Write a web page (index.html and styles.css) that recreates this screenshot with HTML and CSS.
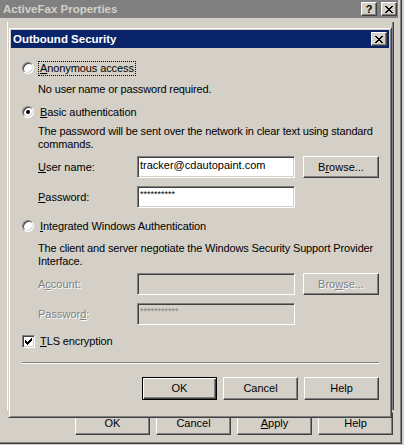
FILE: index.html
```html
<!DOCTYPE html>
<html>
<head>
<meta charset="utf-8">
<link rel="stylesheet" href="styles.css">
</head>
<body>
<div class="win">
  <div class="titlebar inactive">
    <span class="title">ActiveFax Properties</span>
    <div class="caps">
      <span class="cap-btn q">?</span>
      <span class="cap-btn"><svg class="xglyph" width="8" height="7" viewBox="0 0 8 7"><path d="M0 0h2v1H0zM6 0h2v1H6zM1 1h2v1H1zM5 1h2v1H5zM2 2h4v1H2zM3 3h2v1H3zM2 4h4v1H2zM1 5h2v1H1zM5 5h2v1H5zM0 6h2v1H0zM6 6h2v1H6z"/></svg></span>
    </div>
  </div>
  <div class="panel"></div>
  <div class="outer-actions">
    <div class="btn">OK</div>
    <div class="btn">Cancel</div>
    <div class="btn"><u>A</u>pply</div>
    <div class="btn">Help</div>
  </div>

  <div class="dialog">
    <div class="titlebar active">
      <span class="title">Outbound Security</span>
      <div class="caps">
        <span class="cap-btn"><svg class="xglyph" width="8" height="7" viewBox="0 0 8 7"><path d="M0 0h2v1H0zM6 0h2v1H6zM1 1h2v1H1zM5 1h2v1H5zM2 2h4v1H2zM3 3h2v1H3zM2 4h4v1H2zM1 5h2v1H1zM5 5h2v1H5zM0 6h2v1H0zM6 6h2v1H6z"/></svg></span>
      </div>
    </div>
    <div class="dlg-body">
      <div class="opt"><span class="radio"></span><span class="lbl focus"><u>A</u>nonymous access</span></div>
      <p class="desc">No user name or password required.</p>

      <div class="opt gap-basic"><span class="radio checked"></span><span class="lbl"><u>B</u>asic authentication</span></div>
      <p class="desc desc-tight">The password will be sent over the network in clear text using standard<br>commands.</p>
      <div class="field f-first">
        <span class="flabel"><u>U</u>ser name:</span>
        <div class="edit">tracker@cdautopaint.com</div>
        <div class="btn browse">B<u>r</u>owse...</div>
      </div>
      <div class="field">
        <span class="flabel"><u>P</u>assword:</span>
        <div class="edit pw">**********</div>
      </div>

      <div class="opt gap-int"><span class="radio"></span><span class="lbl"><u>I</u>ntegrated Windows Authentication</span></div>
      <p class="desc desc-int">The client and server negotiate the Windows Security Support Provider<br>Interface.</p>
      <div class="field f-first disabled">
        <span class="flabel">A<u>c</u>count:</span>
        <div class="edit"></div>
        <div class="btn browse">Bro<u>w</u>se...</div>
      </div>
      <div class="field disabled">
        <span class="flabel">Passwor<u>d</u>:</span>
        <div class="edit pw">***********</div>
      </div>

      <div class="opt gap-tls"><span class="check"><svg width="7" height="7" viewBox="0 0 7 7"><path d="M0 2h1v3H0zM1 3h1v3H1zM2 4h1v3H2zM3 3h1v3H3zM4 2h1v3H4zM5 1h1v3H5zM6 0h1v3H6z"/></svg></span><span class="lbl chk-lbl"><u>T</u>LS encryption</span></div>

      <div class="sep"></div>
      <div class="actions">
        <div class="btn default">OK</div>
        <div class="btn">Cancel</div>
        <div class="btn">Help</div>
      </div>
    </div>
  </div>
</div>
</body>
</html>
```
FILE: styles.css
```css
* { box-sizing: border-box; }
html, body { margin: 0; padding: 0; }
body {
  width: 404px;
  height: 445px;
  overflow: hidden;
  background: #d4d0c8;
  font-family: "Liberation Sans", Arial, sans-serif;
  font-size: 11px;
  line-height: 13px;
  color: #000;
}
u { text-decoration: underline; text-underline-offset: 1px; }

.win {
  position: relative;
  width: 402px;
  height: 444px;
  border-right: 1px solid #404040;
  border-bottom: 1px solid #404040;
  box-shadow: inset -1px -1px #808080;
}

/* title bars */
.titlebar {
  display: flex;
  align-items: center;
  justify-content: space-between;
  height: 18px;
  font-weight: bold;
  font-size: 11.5px;
  line-height: 18px;
  white-space: nowrap;
}
.titlebar.inactive {
  width: 398px;
  background: #808080;
  color: #d4d0c8;
  padding-left: 3px;
}
.titlebar.active {
  background: #0a246a;
  color: #fff;
  padding-left: 2px;
}
.caps { display: flex; gap: 4px; margin-right: 1px; }
.titlebar.active .caps { margin-right: 2px; }
.cap-btn {
  width: 16px;
  height: 14px;
  display: flex;
  align-items: center;
  justify-content: center;
  background: #d4d0c8;
  border: 1px solid;
  border-color: #fff #404040 #404040 #fff;
  box-shadow: inset -1px -1px #808080, inset 1px 1px #d4d0c8;
  color: #000;
  font-size: 11px;
  line-height: 12px;
  font-weight: bold;
}
.xglyph { display: block; fill: #000; shape-rendering: crispEdges; }

/* background tab panel of the property sheet */
.panel {
  margin: 4px 0 0 7px;
  width: 387px;
  height: 388px;
  border-left: 1px solid #fff;
  border-right: 1px solid #404040;
  box-shadow: inset -1px 0 #808080;
}
.outer-actions {
  display: flex;
  justify-content: flex-end;
  gap: 6px;
  margin-top: 2px;
  padding-right: 8px;
}

/* buttons */
.btn {
  flex: none;
  width: 75px;
  height: 23px;
  display: flex;
  align-items: center;
  justify-content: center;
  background: #d4d0c8;
  border: 1px solid;
  border-color: #fff #404040 #404040 #fff;
  box-shadow: inset -1px -1px #808080, inset 1px 1px #d4d0c8;
  white-space: nowrap;
}
.btn.default {
  border: 1px solid #000;
  box-shadow: inset 1px 1px #fff, inset -1px -1px #404040, inset -2px -2px #808080;
}

/* dialog window */
.dialog {
  position: absolute;
  left: 8px;
  top: 27px;
  width: 384px;
  height: 391px;
  background: #d4d0c8;
  border: 1px solid;
  border-color: #d4d0c8 #404040 #404040 #d4d0c8;
  box-shadow: inset 1px 1px #fff, inset -1px -1px #808080;
  padding: 2px;
}
.dlg-body { padding: 14px 10px 0 11px; }

.opt { display: flex; align-items: center; height: 13px; white-space: nowrap; }
.lbl { margin-left: 5px; padding: 0 1px; letter-spacing: -0.1px; }
.lbl.focus { outline: 1px dotted #000; outline-offset: 0; }
.chk-lbl { margin-left: 4px; }
.gap-basic { margin-top: 10px; }
.gap-int { margin-top: 12px; }
.gap-tls { margin-top: 10px; }

.radio {
  flex: none;
  width: 12px;
  height: 12px;
  border-radius: 50%;
  background: #fff;
  border: 1px solid;
  border-color: #808080 #fff #fff #808080;
  box-shadow: inset 1px 1px #404040, inset -1px -1px #d4d0c8;
  display: flex;
  align-items: center;
  justify-content: center;
  margin-bottom: 1px;
}
.radio.checked::after {
  content: "";
  width: 4px;
  height: 4px;
  border-radius: 50%;
  background: #000;
}
.check {
  flex: none;
  width: 13px;
  height: 13px;
  background: #fff;
  border: 1px solid;
  border-color: #808080 #fff #fff #808080;
  box-shadow: inset 1px 1px #404040, inset -1px -1px #d4d0c8;
  display: flex;
  align-items: center;
  justify-content: center;
}
.check svg { display: block; fill: #000; shape-rendering: crispEdges; }

.desc { margin: 8px 0 0 16px; white-space: nowrap; letter-spacing: -0.15px; }
.desc-tight { margin-top: 6px; }
.desc-int { margin-top: 9px; }

.field {
  display: flex;
  align-items: center;
  height: 22px;
  margin: 8px 0 0 16px;
}
.field.f-first { margin-top: 5px; }
.flabel { flex: none; width: 99px; white-space: nowrap; }
.edit {
  flex: none;
  width: 158px;
  height: 22px;
  background: #fff;
  border: 1px solid;
  border-color: #808080 #fff #fff #808080;
  box-shadow: inset 1px 1px #404040, inset -1px -1px #d4d0c8;
  padding: 2px 0 0 2px;
  white-space: nowrap;
  overflow: hidden;
}
.edit.pw { font-size: 9px; line-height: 11px; }
.browse { width: 76px; height: 22px; margin-left: 8px; }

.disabled .flabel,
.disabled .browse { color: #808080; text-shadow: 1px 1px #fff; }
.disabled .edit { background: #d4d0c8; color: #808080; }

.sep {
  margin-top: 14px;
  border-top: 1px solid #808080;
  border-bottom: 1px solid #fff;
}
.actions {
  display: flex;
  justify-content: flex-end;
  gap: 6px;
  margin-top: 13px;
}
```
